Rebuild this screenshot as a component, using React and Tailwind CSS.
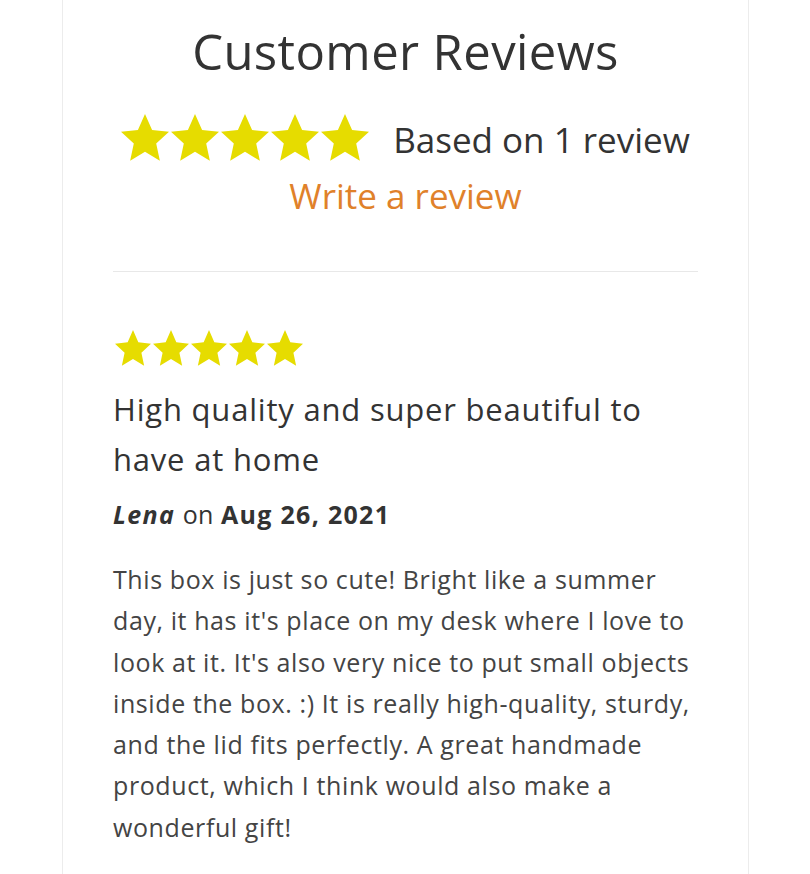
const Star = ({ w, h }) => (
  <svg width={w} height={h} viewBox="1.5 1.5 21 20" preserveAspectRatio="none" className="block shrink-0">
    <polygon
      points="12,1.5 15.1,8.3 22.5,9.1 16.9,14.1 18.5,21.4 12,17.6 5.5,21.4 7.1,14.1 1.5,9.1 8.9,8.3"
      fill="#e6dc00"
    />
  </svg>
);

const Stars = ({ w, h, gap }) => (
  <div className={"flex " + gap}>
    {[0, 1, 2, 3, 4].map((i) => (
      <Star key={i} w={w} h={h} />
    ))}
  </div>
);

export default function App() {
  return (
    <div className="w-[810px] h-[874px] overflow-hidden bg-white" style={{ fontFamily: "'Open Sans', 'Noto Sans', sans-serif" }}>
      <div className="ml-[62px] w-[687px] min-h-[874px] border-x border-[#ececec] px-[50px]">
        {/* summary */}
        <div className="flex flex-col items-center pt-[19px]">
          <h2 className="text-[49px] leading-[64px] tracking-[0.4px] text-[#333]">Customer Reviews</h2>
          <div className="mt-[30px] flex items-center gap-[24px]">
            <Stars w={48} h={47} gap="gap-[2px]" />
            <span className="mt-[5px] text-[35px] leading-[44px] text-[#333]">Based on 1 review</span>
          </div>
          <a className="mt-[12px] text-[35px] leading-[44px] text-[#e0812a]">Write a review</a>
        </div>

        <div className="mt-[53px] border-t border-[#e8e8e8]"></div>

        {/* single review */}
        <div className="pt-[58px]">
          <div className="ml-[2px]">
            <Stars w={36} h={36} gap="gap-[2px]" />
          </div>
          <h3 className="mt-[18px] text-[31px] leading-[50px] tracking-[0.8px] text-[#333]">
            High quality and super beautiful to
            <br />
            have at home
          </h3>
          <div className="mt-[10px] text-[25px] leading-[40px] tracking-[1.3px] text-[#333]">
            <em className="font-bold">Lena</em> <span className="tracking-normal">on</span> <strong>Aug 26, 2021</strong>
          </div>
          <p className="mt-[25px] text-[25px] leading-[41.3px] tracking-[0.6px] text-[#444]">
            This box is just so cute! Bright like a summer
            <br />
            day, it has it's place on my desk where I love to
            <br />
            look at it. It's also very nice to put small objects
            <br />
            inside the box. :) It is really high-quality, sturdy,
            <br />
            and the lid fits perfectly. A great handmade
            <br />
            product, which I think would also make a
            <br />
            wonderful gift!
          </p>
        </div>
      </div>
    </div>
  );
}
